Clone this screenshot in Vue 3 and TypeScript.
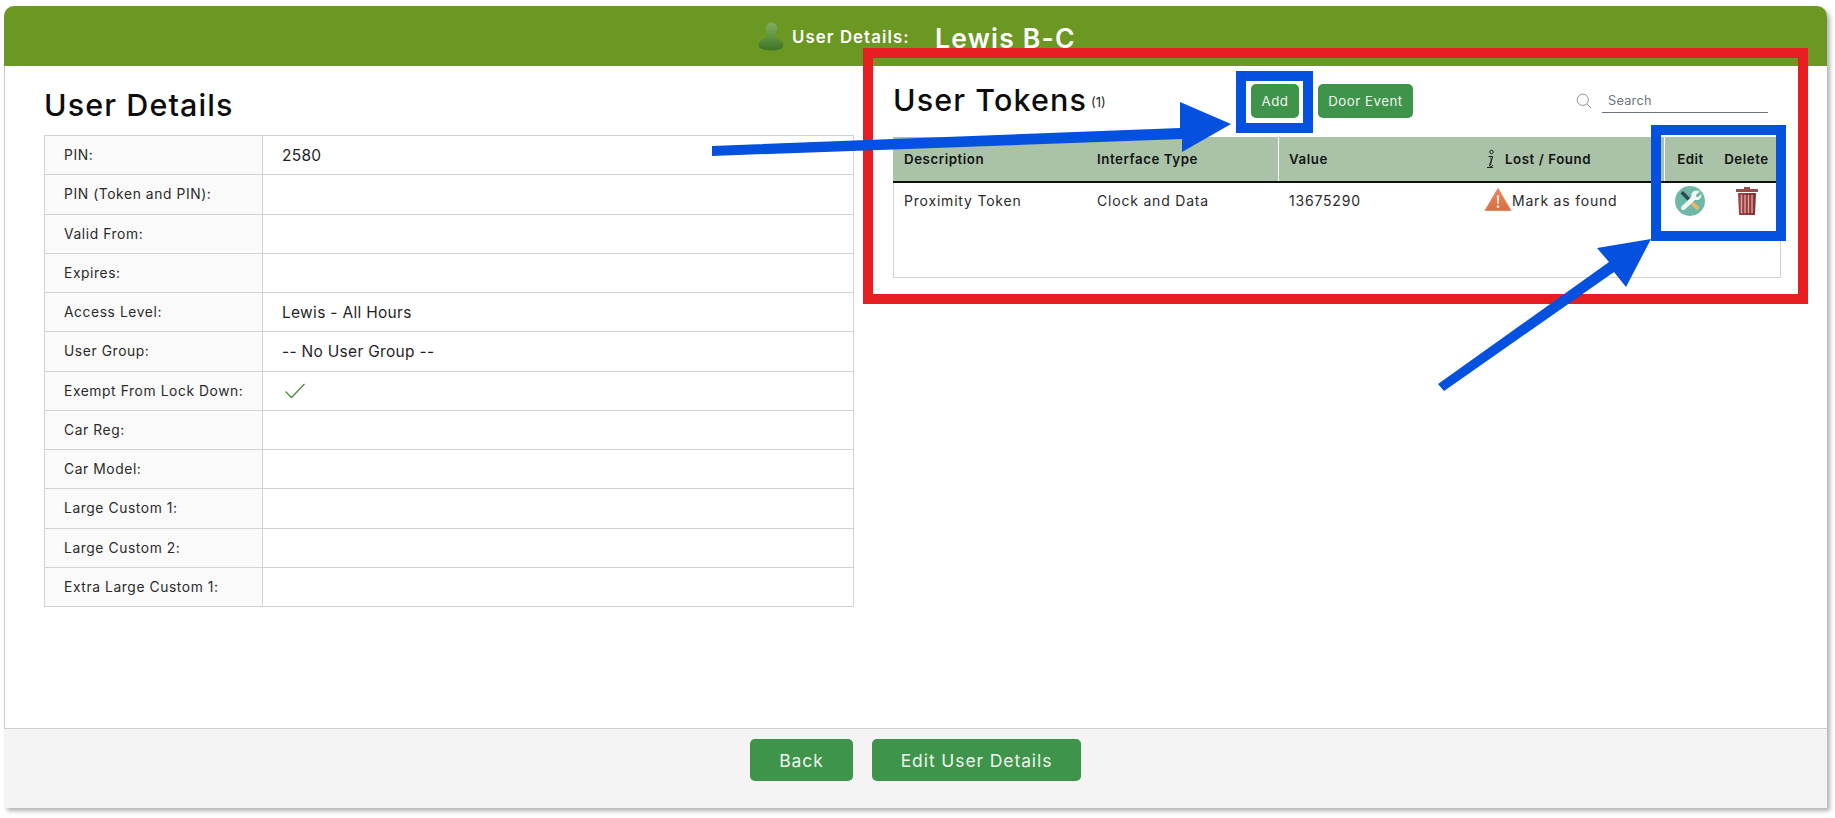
<script setup lang="ts">
interface DetailRow {
  label: string
  value?: string
  check?: boolean
}

const rows: DetailRow[] = [
  { label: 'PIN:', value: '2580' },
  { label: 'PIN (Token and PIN):' },
  { label: 'Valid From:' },
  { label: 'Expires:' },
  { label: 'Access Level:', value: 'Lewis - All Hours' },
  { label: 'User Group:', value: '-- No User Group --' },
  { label: 'Exempt From Lock Down:', check: true },
  { label: 'Car Reg:' },
  { label: 'Car Model:' },
  { label: 'Large Custom 1:' },
  { label: 'Large Custom 2:' },
  { label: 'Extra Large Custom 1:' }
]
</script>

<template>
  <div class="page">
    <div class="card">
      <header class="top">
        <svg class="person" width="26" height="29" viewBox="0 0 26 29">
          <defs>
            <linearGradient id="pg" x1="0" y1="0" x2="0" y2="1">
              <stop offset="0" stop-color="#86ad62" />
              <stop offset="0.5" stop-color="#5f9440" />
              <stop offset="1" stop-color="#3f7326" />
            </linearGradient>
          </defs>
          <path d="M13.500.5c3.600 0 5.600 2.600 5.600 6.300 0 2.800-.9 5.200-2.200 6.800.1 1.700 1.700 2.500 3.900 3.600 2.800 1.400 4.700 3.400 4.700 6 0 3.400-5.400 5.300-12.500 5.300S.5 26.600.5 23.200c0-2.600 1.900-4.600 4.700-6 2.200-1.100 3.800-1.900 3.900-3.600C8 12 7.400 9.600 7.900 6.800 8.300 3.100 9.900.5 13.500.5z" fill="url(#pg)" />
        </svg>
        <span class="top-label">User Details:</span>
        <span class="top-name">Lewis B-C</span>
      </header>

      <main class="content">
        <section class="left">
          <h1 class="title">User Details</h1>
          <table class="details">
            <tbody>
              <tr v-for="row in rows" :key="row.label">
                <th>{{ row.label }}</th>
                <td>
                  <svg v-if="row.check" class="tick" width="22" height="16" viewBox="0 0 22 16">
                    <path d="M1.500 8.500 7.500 14.500 20.500 1" fill="none" stroke="#4a8a3c" stroke-width="1.300" />
                  </svg>
                  <template v-else>{{ row.value }}</template>
                </td>
              </tr>
            </tbody>
          </table>
        </section>

        <section class="right">
          <div class="tools">
            <div class="tools-title">
              <h2 class="title">User Tokens</h2>
              <span class="count">(1)</span>
            </div>
            <button class="btn small add">Add</button>
            <button class="btn small">Door Event</button>
            <div class="search">
              <svg width="16" height="16" viewBox="0 0 16 16">
                <circle cx="6.800" cy="6.800" r="5.600" fill="none" stroke="#8d959c" stroke-width="1" />
                <path d="M10.900 11 15 15" stroke="#8d959c" stroke-width="1" />
              </svg>
              <input class="search-input" placeholder="Search" />
            </div>
          </div>

          <div class="tokens">
            <div class="t-head">
              <span class="c-desc">Description</span>
              <span class="c-type">Interface Type</span>
              <span class="c-value">Value</span>
              <span class="c-lost">
                <svg width="12" height="20" viewBox="0 0 12 20">
                  <circle cx="6.500" cy="3" r="1.700" fill="none" stroke="#222" stroke-width="1" />
                  <path d="M3.500 7.500h4.200c-.6 3.500-3 6.500-3.200 9 0 1.500 2 1.500 3.500-.4M5.800 8.500c.7 2.500.5 5.500-.5 8" fill="none" stroke="#222" stroke-width="1" />
                  <path d="M2 18.500h6" stroke="#222" stroke-width="1" />
                </svg>
                <span>Lost / Found</span>
              </span>
              <span class="c-edit">Edit</span>
              <span class="c-delete">Delete</span>
            </div>
            <div class="t-row">
              <span class="c-desc">Proximity Token</span>
              <span class="c-type">Clock and Data</span>
              <span class="c-value">13675290</span>
              <span class="c-lost found">
                <svg width="28" height="24" viewBox="0 0 28 24">
                  <defs>
                    <linearGradient id="wg" x1="0" y1="0" x2="0" y2="1">
                      <stop offset="0" stop-color="#e9845a" />
                      <stop offset="1" stop-color="#d96f42" />
                    </linearGradient>
                  </defs>
                  <path d="M14 .5 27 22.500H1z" fill="url(#wg)" stroke="#e08a63" stroke-width="1" stroke-linejoin="round" />
                  <path d="M12.800 7.500h2.400l-.5 8.500h-1.400z" fill="#fbeee6" />
                  <circle cx="14" cy="18.700" r="1.400" fill="#fbeee6" />
                </svg>
                <span>Mark as found</span>
              </span>
              <span class="c-edit">
                <svg width="30" height="30" viewBox="0 0 30 30">
                  <circle cx="15" cy="15" r="15" fill="#6bb9a6" />
                  <path d="M5.500 7.500 8 5l8 8-2.500 2.500z" fill="#2f4858" />
                  <path d="M13 16l3-3 7.500 7.500c.9 1 .9 2 .1 2.800-.8.800-1.900.800-2.800 0z" fill="#efb368" />
                  <path d="M24.500 5.800l-3.500 3.300.2 1.700 1.700.4 3.400-3.200c.5 2.600-.4 4.700-2.800 5.700-1.300.5-2.500.4-3.500 0L10 23.500c-1.100 1-2.500 1-3.400.1-.8-.9-.8-2.300.2-3.300l9.700-9.500c-.4-1.500-.2-3 .7-4.300 1.500-2 4.700-2.900 7.800-.7z" fill="#f3f7f4" />
                </svg>
              </span>
              <span class="c-delete">
                <svg width="24" height="30" viewBox="0 0 24 30">
                  <defs>
                    <linearGradient id="tg" x1="0" y1="0" x2="1" y2="0">
                      <stop offset="0" stop-color="#a34444" />
                      <stop offset="1" stop-color="#843030" />
                    </linearGradient>
                  </defs>
                  <path d="M9 3V1h6v2h8v3H1V3z" fill="#9a4a48" />
                  <path d="M3 7h18l-1 22H4z" fill="url(#tg)" />
                  <path d="M6.500 9v18M10 9v18M13.500 9v18M17 9v18" stroke="#d9a8a5" stroke-width="1.400" />
                </svg>
              </span>
            </div>
          </div>
        </section>
      </main>

      <footer class="bottom">
        <button class="btn large back">Back</button>
        <button class="btn large edit">Edit User Details</button>
      </footer>
    </div>

    <svg class="marks" width="1835" height="818" viewBox="0 0 1835 818">
      <rect x="868" y="53" width="935" height="246" fill="none" stroke="#e71d21" stroke-width="10" />
      <rect x="1241" y="76" width="67" height="52" fill="none" stroke="#0351de" stroke-width="10" />
      <rect x="1656" y="130" width="125" height="106" fill="none" stroke="#0351de" stroke-width="10" />
      <polygon points="712,146 1180,128 1180,102 1231,124 1182,152 1182,139 712,156" fill="#0351de" />
      <polygon points="1651,239 1626,287 1614,272 1444,391 1438,384 1609,262 1597,248" fill="#0351de" />
    </svg>
  </div>
</template>

<style>
html,
body {
  margin: 0;
  background: #ffffff;
}
</style>

<style scoped>
.page {
  position: relative;
  width: 1835px;
  height: 818px;
  overflow: hidden;
  font-family: Inter, "Liberation Sans", sans-serif;
  color: #1f1f1f;
}

.card {
  margin: 6px 0 0 4px;
  width: 1823px;
  height: 802px;
  box-sizing: border-box;
  display: flex;
  flex-direction: column;
  border-radius: 10px 10px 0 0;
  border-left: 1px solid #cfcfcf;
  background: #fff;
  box-shadow: 3px 3px 4px rgba(0, 0, 0, 0.3);
}

.top {
  height: 60px;
  flex: none;
  box-sizing: border-box;
  padding: 11px 0 0 754px;
  display: flex;
  align-items: flex-start;
  background: #6b9723;
  border-radius: 10px 10px 0 0;
  color: #fff;
  margin-left: -1px;
}

.person {
  margin-top: 5px;
}

.top-label {
  margin: 10px 0 0 8px;
  width: 143px;
  font-size: 16.800px;
  font-weight: 600;
  letter-spacing: 1.100px;
  line-height: 20px;
  white-space: nowrap;
}

.top-name {
  margin-top: 6px;
  font-size: 26.500px;
  font-weight: 600;
  letter-spacing: 1.200px;
  line-height: 30px;
}

.content {
  flex: 1;
  display: flex;
}

.left {
  width: 810px;
  margin-left: 39px;
  flex: none;
}

.left .title {
  height: 69px;
  line-height: 78px;
}

.title {
  margin: 0;
  font-size: 30.500px;
  font-weight: 500;
  letter-spacing: 1.100px;
  line-height: 32px;
  color: #0c0c0c;
}

.details {
  width: 810px;
  table-layout: fixed;
  border-collapse: collapse;
}

.details th,
.details td {
  height: 39.250px;
  box-sizing: border-box;
  padding: 0;
  border: 1px solid #d2d2d2;
  text-align: left;
  vertical-align: middle;
}

.details th {
  width: 218px;
  padding-left: 19px;
  background: #fafafa;
  font-size: 13.800px;
  font-weight: 400;
  letter-spacing: 0.600px;
  color: #2a2a2a;
}

.details td {
  padding-left: 19px;
  font-size: 15.500px;
  letter-spacing: 0.300px;
}

.tick {
  display: block;
  margin-left: 2px;
}

.right {
  width: 888px;
  margin-left: 39px;
  padding-top: 18px;
  flex: none;
}

.tools {
  display: flex;
  align-items: center;
  height: 34px;
}

.tools-title {
  width: 358px;
  flex: none;
  display: flex;
  align-items: center;
  gap: 4px;
}

.tools-title .title {
  margin-top: -2px;
}

.count {
  font-size: 13px;
  margin-top: 2px;
}

.btn {
  border: 0;
  border-radius: 5px;
  background: #3e944a;
  color: #eef6ee;
  font-family: inherit;
  padding: 0;
}

.small {
  height: 34px;
  width: 95px;
  font-size: 13.300px;
  letter-spacing: 0.500px;
}

.add {
  width: 48px;
  margin-right: 19px;
}

.large {
  height: 42px;
  font-size: 17.500px;
  letter-spacing: 0.900px;
}

.back {
  width: 103px;
}

.edit {
  width: 209px;
}

.search {
  margin-left: auto;
  margin-right: 13px;
  display: flex;
  align-items: center;
  gap: 10px;
}

.search-input {
  width: 166px;
  box-sizing: border-box;
  height: 26px;
  padding: 2px 0 0 6px;
  border: 0;
  border-bottom: 1px solid #6c757d;
  outline: none;
  font-family: inherit;
  font-size: 12.800px;
  letter-spacing: 0.200px;
  margin-top: -2px;
}

.search-input::placeholder {
  color: #6c757d;
  opacity: 1;
}

.tokens {
  margin-top: 19px;
  height: 141px;
  box-sizing: border-box;
  border: 1px solid #d2d2d2;
  border-top: 0;
}

.t-head,
.t-row {
  display: grid;
  grid-template-columns: 193px 192px 195px 191px 52px 1fr;
  margin-left: -1px;
  margin-right: -1px;
}

.t-head {
  height: 46px;
  box-sizing: border-box;
  background: #a9c2a8;
  border-bottom: 2px solid #111;
  align-items: center;
  font-size: 13.300px;
  font-weight: 600;
  letter-spacing: 0.550px;
  color: #141414;
}

.t-head > span {
  height: 100%;
  display: flex;
  align-items: center;
}

.c-desc,
.c-type {
  padding-left: 11px;
}

.t-head .c-value {
  padding-left: 10px;
  border-left: 1px solid #fff;
}

.t-row .c-value {
  padding-left: 11px;
}

.c-lost {
  display: flex;
  align-items: center;
  gap: 8px;
  padding-left: 12px;
}

.t-head .c-edit {
  border-left: 1px solid #fff;
  justify-content: center;
}

.t-head .c-delete {
  justify-content: center;
  padding-right: 4px;
}

.t-row {
  height: 36px;
  align-items: center;
  font-size: 14px;
  letter-spacing: 0.800px;
  color: #2a2a2a;
}

.t-row > span:not(.c-edit):not(.c-delete) {
  margin-top: -2px;
}

.found {
  gap: 0;
  padding-left: 11px;
}

.t-row .c-edit,
.t-row .c-delete {
  display: flex;
  justify-content: center;
}

.t-row .c-delete {
  padding-right: 4px;
}

.bottom {
  height: 80px;
  flex: none;
  box-sizing: border-box;
  padding-top: 10px;
  display: flex;
  justify-content: center;
  align-items: flex-start;
  gap: 19px;
  background: #f4f4f4;
  border-top: 1px solid #cfcfcf;
  margin-left: -1px;
}

.marks {
  position: absolute;
  top: 0;
  left: 0;
  pointer-events: none;
}
</style>
